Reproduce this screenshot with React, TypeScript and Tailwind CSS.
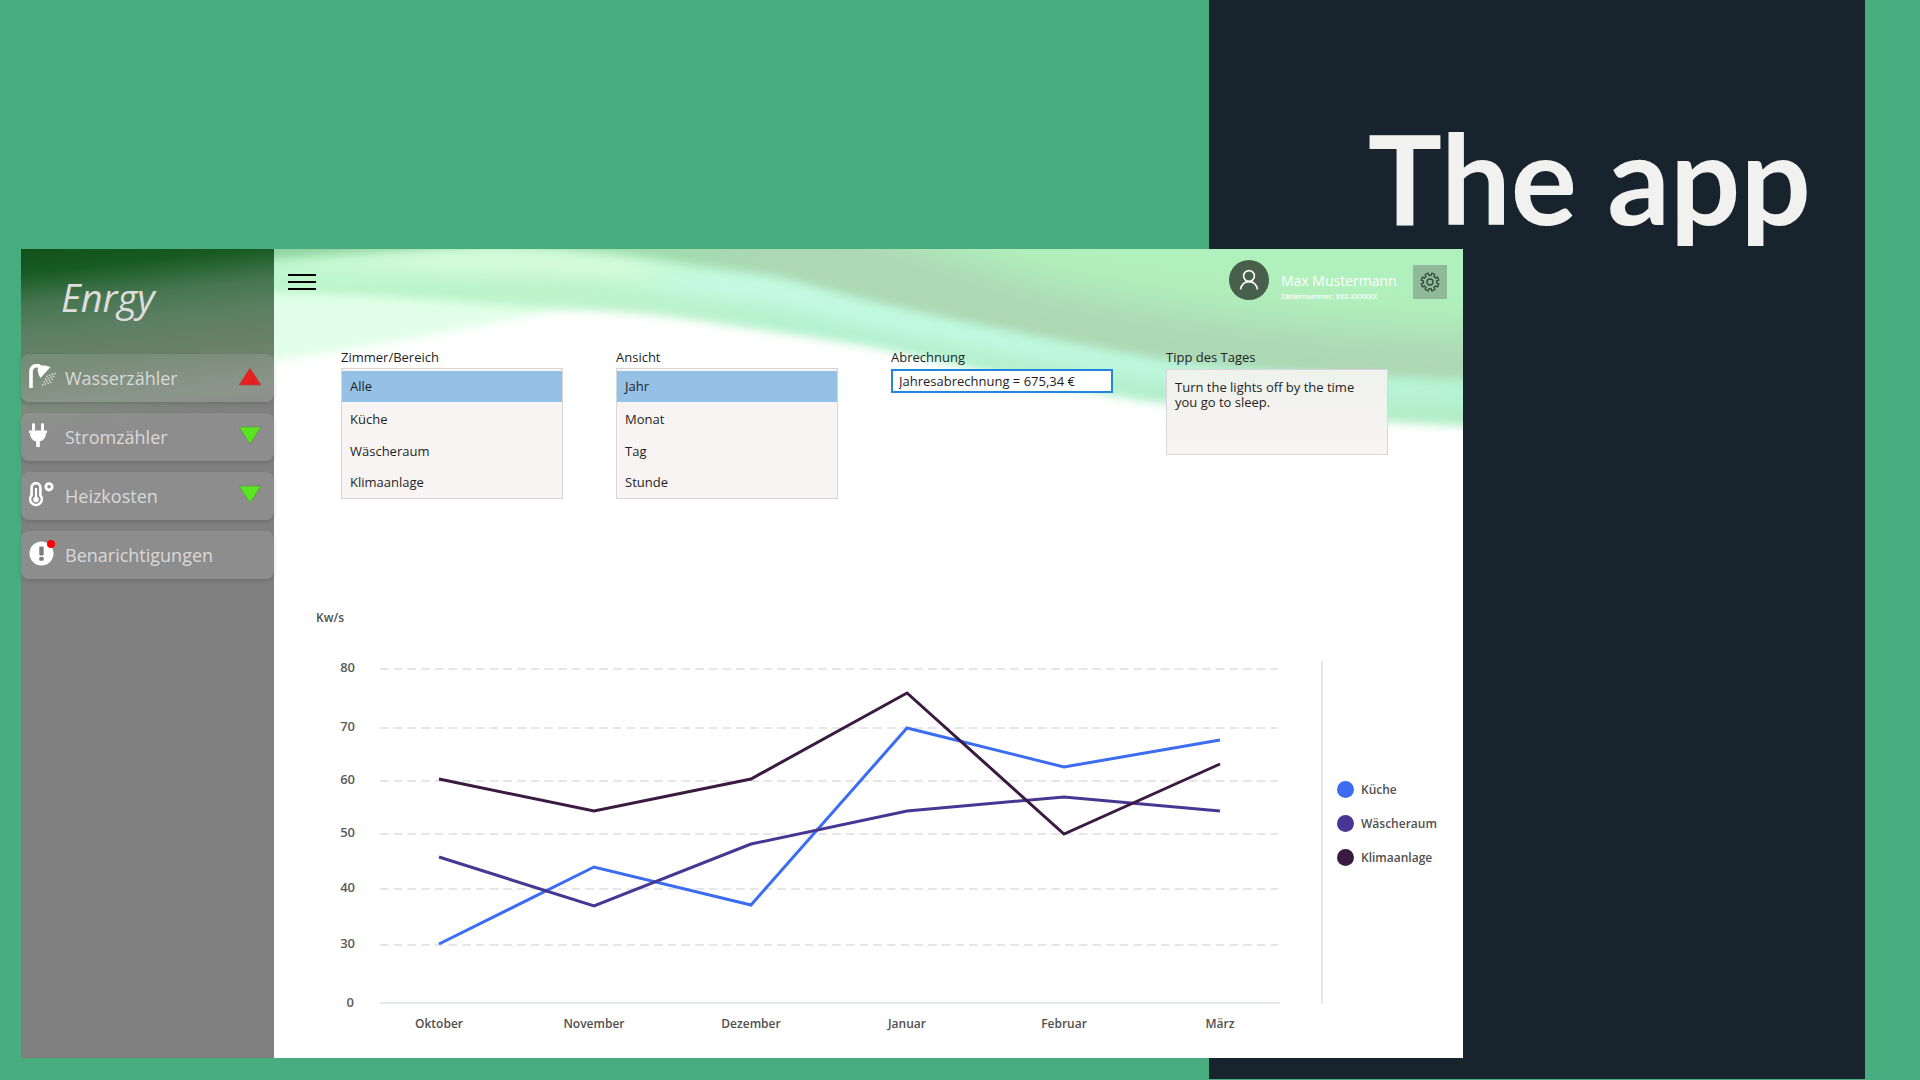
import type { ReactNode } from "react";

const months = ["Oktober", "November", "Dezember", "Januar", "Februar", "März"];
const monthX = [123, 278, 435, 591, 748, 904];

const ticks = [
  { label: "80", y: 19 },
  { label: "70", y: 78 },
  { label: "60", y: 131 },
  { label: "50", y: 184 },
  { label: "40", y: 239 },
  { label: "30", y: 295 },
];

const series = [
  { name: "Küche", color: "#3c6df0", ys: [294, 217, 255, 78, 117, 90] },
  { name: "Wäscheraum", color: "#473793", ys: [207, 256, 194, 161, 147, 161] },
  { name: "Klimaanlage", color: "#3a1a40", ys: [129, 161, 129, 43, 184, 114] },
];

function ShowerIcon() {
  const drops: number[][] = [];
  for (let r = 0; r < 4; r++) {
    for (let c = 0; c < 4; c++) drops.push([26 - r * 1.4 - c * 2.7, 9.5 + r * 2.9 + c * 0.9]);
  }
  return (
    <svg width="28" height="24" viewBox="0 0 28 24" aria-hidden="true">
      <path d="M2 24V7.5C2 1.5 8.5 0 12 3.5" fill="none" stroke="#fff" strokeWidth="3.6" />
      <path d="M9 3.5C13 0.5 17 1.5 21.5 3L11.5 14C9.5 10.5 8 7 9 3.5Z" fill="#fff" />
      {drops.map(([x, y]) => (
        <circle key={`${x}-${y}`} cx={x} cy={y} r="0.8" fill="#eee" />
      ))}
    </svg>
  );
}

function PlugIcon() {
  return (
    <svg width="28" height="24" viewBox="0 0 28 24" aria-hidden="true" fill="#fff">
      <rect x="3" y="0" width="3" height="8" rx="1.5" />
      <rect x="12" y="0" width="3" height="8" rx="1.5" />
      <path d="M0 7.5H18V10H17C17 14.5 14.5 17.5 10.8 18.5V24H7.2V18.5C3.5 17.5 1 14.5 1 10H0Z" />
    </svg>
  );
}

function ThermometerIcon() {
  return (
    <svg width="28" height="25" viewBox="0 0 28 25" aria-hidden="true" fill="none" stroke="#fff">
      <path d="M2.6 13.4V5.6A4.4 4.4 0 0 1 11.4 5.6V13.4A5.8 5.8 0 1 1 2.6 13.4Z" strokeWidth="2.6" />
      <path d="M7 6V17" strokeWidth="2.2" />
      <circle cx="7" cy="17.6" r="2.8" fill="#fff" stroke="none" />
      <circle cx="20" cy="4.8" r="3.2" strokeWidth="2.8" />
    </svg>
  );
}

function AlertIcon() {
  return (
    <svg width="28" height="26" viewBox="0 0 28 26" aria-hidden="true">
      <circle cx="12.5" cy="13.5" r="12" fill="#fff" />
      <rect x="10.3" y="6.5" width="4.4" height="9" rx="1.2" fill="#7d7d7d" />
      <rect x="10.3" y="17" width="4.4" height="3.8" rx="1.2" fill="#7d7d7d" />
      <circle cx="22" cy="4" r="4" fill="#f00" />
    </svg>
  );
}

function Trend({ dir }: { dir: "up" | "down" }) {
  return (
    <svg
      width="24"
      height="19"
      viewBox="0 0 24 19"
      role="img"
      aria-label={dir === "up" ? "steigend" : "fallend"}
      className="mb-1"
    >
      {dir === "up" ? (
        <path d="M12 1L23 18H1Z" fill="#e62020" stroke="#a05050" strokeWidth="0.7" />
      ) : (
        <path d="M12 18L23 1H1Z" fill="#5ae61e" stroke="#5c9048" strokeWidth="0.7" />
      )}
    </svg>
  );
}

function gearPath() {
  const pts: string[] = [];
  const steps: [number, number][] = [
    [-13, 6.8],
    [-11, 9],
    [11, 9],
    [13, 6.8],
  ];
  for (let i = 0; i < 8; i++) {
    for (const [off, r] of steps) {
      const a = ((i * 45 + 22.5 + off) * Math.PI) / 180;
      pts.push(`${(10 + r * Math.cos(a)).toFixed(2)} ${(10 + r * Math.sin(a)).toFixed(2)}`);
    }
  }
  return `M${pts.join("L")}Z`;
}

function Waves() {
  return (
    <svg
      className="absolute inset-x-0 top-0 h-[210px] w-full"
      viewBox="0 0 1189 210"
      preserveAspectRatio="none"
      aria-hidden="true"
    >
      <defs>
        <filter id="soft" x="-10%" y="-30%" width="120%" height="160%">
          <feGaussianBlur stdDeviation="5" />
        </filter>
        <filter id="softer" x="-10%" y="-60%" width="120%" height="220%">
          <feGaussianBlur stdDeviation="8" />
        </filter>
        <filter id="glow" x="-20%" y="-60%" width="140%" height="220%">
          <feGaussianBlur stdDeviation="18" />
        </filter>
        <linearGradient id="band" gradientUnits="userSpaceOnUse" x1="0" y1="0" x2="1189" y2="0">
          <stop offset="0" stopColor="#b9f5cb" />
          <stop offset="0.24" stopColor="#bff3ca" />
          <stop offset="0.45" stopColor="#b4f2cf" />
          <stop offset="1" stopColor="#b1edc6" />
        </linearGradient>
        <linearGradient id="cyan" gradientUnits="userSpaceOnUse" x1="340" y1="0" x2="1189" y2="0">
          <stop offset="0" stopColor="#c6fbe4" stopOpacity="0" />
          <stop offset="0.12" stopColor="#c6fbe4" />
          <stop offset="0.5" stopColor="#bef8df" />
          <stop offset="1" stopColor="#b6f3d4" />
        </linearGradient>
        <linearGradient id="light" gradientUnits="userSpaceOnUse" x1="0" y1="0" x2="440" y2="0">
          <stop offset="0" stopColor="#d5fcdb" stopOpacity="0.2" />
          <stop offset="0.4" stopColor="#d5fcdb" />
          <stop offset="0.8" stopColor="#d5fcdb" />
          <stop offset="1" stopColor="#d5fcdb" stopOpacity="0" />
        </linearGradient>
        <linearGradient id="edge" gradientUnits="userSpaceOnUse" x1="360" y1="0" x2="500" y2="0">
          <stop offset="0" stopColor="#9edbac" />
          <stop offset="1" stopColor="#add8b4" />
        </linearGradient>
      </defs>
      <path d="M-30 -30H400V45L280 62C200 78 100 98 -30 116Z" fill="#e1ffe8" filter="url(#soft)" />
      <path
        d="M-30 43C60 44 133 48 200 54C280 60 350 61 420 71C490 82 540 88 603 99C660 111 700 121 741 128C800 140 840 148 885 154C960 164 1100 173 1230 179V-30H-30Z"
        fill="url(#band)"
        filter="url(#soft)"
      />
      <path d="M-30 22C60 14 120 12 220 13C300 14 380 20 440 32" fill="none" stroke="url(#light)" strokeWidth="24" filter="url(#softer)" />
      <path
        d="M340 34C420 30 480 38 516 44C603 66 690 84 776 100C830 111 900 124 1000 132C1080 138 1160 142 1230 144"
        fill="none"
        stroke="url(#cyan)"
        strokeWidth="28"
        filter="url(#softer)"
      />
      <path
        d="M250 -30H1230V130C1100 128 960 121 885 109L776 89L690 72L603 53L516 30C470 20 430 18 400 12C350 4 300 0 250 -6Z"
        fill="url(#edge)"
        filter="url(#soft)"
      />
      <path d="M600 -80H1280V84C1060 84 900 62 780 36C720 20 660 0 600 -20Z" fill="#b0f0bc" filter="url(#glow)" />
      <path d="M-30 -30H200V-5C130 0 60 5 -30 12Z" fill="#92d3a0" filter="url(#soft)" />
    </svg>
  );
}

function NavItem({ icon, label, trend }: { icon: ReactNode; label: string; trend?: "up" | "down" }) {
  return (
    <li>
      <button className="flex h-12 w-full items-center rounded-lg bg-white/10 pr-3 pl-2 text-left shadow-[0_2px_4px_rgba(0,0,0,0.14)]">
        <span className="mb-1 w-9 shrink-0">{icon}</span>
        <span className="flex-1 text-lg text-[#d9d9d9]">{label}</span>
        {trend && <Trend dir={trend} />}
      </button>
    </li>
  );
}

function ListBox({ id, label, items }: { id: string; label: string; items: string[] }) {
  return (
    <div>
      <div id={id} className="h-[21px] leading-5">
        {label}
      </div>
      <div role="listbox" aria-labelledby={id} className="border border-[#d8d6d6] bg-[#f9f4f4] pt-[2px]">
        {items.map((item, i) => (
          <button
            key={item}
            role="option"
            aria-selected={i === 0}
            className={
              i === 0
                ? "mb-[2px] block h-[31px] w-full bg-[#95c1e7] px-2 text-left"
                : "block h-8 w-full px-2 text-left last:h-[30px]"
            }
          >
            {item}
          </button>
        ))}
      </div>
    </div>
  );
}

function Chart() {
  return (
    <svg viewBox="0 0 966 386" className="h-auto min-w-0 flex-1" role="img" aria-label="Verbrauch in Kw/s">
      {ticks.map((t) => (
        <g key={t.label}>
          <text x="39" y={t.y + 3} textAnchor="end" fontSize="13" fontWeight="600" fill="#5a5a5a">
            {t.label}
          </text>
          <path d={`M64 ${t.y}H962`} stroke="#e3e7ea" strokeWidth="2" strokeDasharray="8.7 5" />
        </g>
      ))}
      <text x="38" y="357" textAnchor="end" fontSize="13" fontWeight="600" fill="#5a5a5a">
        0
      </text>
      <path d="M64 353H964" stroke="#e3e8eb" strokeWidth="2" />
      {series.map((s) => (
        <polyline
          key={s.name}
          points={s.ys.map((y, i) => `${monthX[i]},${y}`).join(" ")}
          fill="none"
          stroke={s.color}
          strokeWidth="3"
        />
      ))}
      {months.map((m, i) => (
        <text key={m} x={monthX[i]} y="378" textAnchor="middle" fontSize="12" fontWeight="600" fill="#505050">
          {m}
        </text>
      ))}
    </svg>
  );
}

export default function App() {
  return (
    <div className="grid min-h-screen grid-cols-[21px_1188fr_254fr_402fr_55px] grid-rows-[249px_1fr_22px] bg-[#47ad7f] font-['Open_Sans','Noto_Sans',sans-serif]">
      <div className="col-span-2 col-start-3 row-span-3 row-start-1 mb-px bg-[#18242d]" />
      <h1 className="col-span-2 col-start-3 row-start-1 pt-[103px] pr-[54px] text-right font-['Lato',sans-serif] text-[124px] leading-[148px] font-bold whitespace-nowrap text-[#f1f1ef]">
        The app
      </h1>

      <div className="col-span-2 col-start-2 row-start-2 flex bg-white">
        <aside className="w-[253px] shrink-0 bg-[linear-gradient(174deg,#12521a_0px,#175a22_24px,#477650_56px,#5c7f63_85px,#6b8069_120px,#7e8a7d_160px,#808080_180px)]">
          <div className="flex h-[105px] items-center pl-[40px] text-[38px] text-[#dddddd] italic">
            <span className="mb-2">Enrgy</span>
          </div>
          <ul className="flex flex-col gap-[11px]">
            <NavItem icon={<ShowerIcon />} label="Wasserzähler" trend="up" />
            <NavItem icon={<PlugIcon />} label="Stromzähler" trend="down" />
            <NavItem icon={<ThermometerIcon />} label="Heizkosten" trend="down" />
            <NavItem icon={<AlertIcon />} label="Benarichtigungen" />
          </ul>
        </aside>

        <main className="relative min-w-0 flex-1 text-[13px] text-[#1e1e1e]">
          <Waves />
          <div className="relative">
            <header className="flex h-[66px] items-center pr-4 pl-[14px]">
              <button aria-label="Menü">
                <svg width="28" height="18" viewBox="0 0 28 18" stroke="#000" strokeWidth="2">
                  <path d="M0 2H28M0 9H28M0 16H28" />
                </svg>
              </button>
              <div className="mb-1 ml-auto flex h-10 w-10 items-center justify-center rounded-full bg-[#475f4b]">
                <svg width="20" height="22" viewBox="0 0 20 22" fill="none" stroke="#fff" strokeWidth="1.6" aria-hidden="true">
                  <circle cx="10" cy="7" r="5.4" />
                  <path d="M1.5 20.5C2.5 15.5 5.5 12.6 10 12.6S17.5 15.5 18.5 20.5" />
                </svg>
              </div>
              <div className="ml-3 w-[132px] pt-2 text-white">
                <div className="text-[14px] leading-[22px] font-medium whitespace-nowrap">Max Mustermann</div>
                <div className="text-[7px] leading-[10px] font-semibold whitespace-nowrap">Zählernummer: XXX-XXXXXX</div>
              </div>
              <button aria-label="Einstellungen" className="flex h-[34px] w-[34px] items-center justify-center bg-[#8fb999]">
                <svg width="20" height="20" viewBox="0 0 20 20" fill="none" stroke="#2f4a38" strokeWidth="1.3" strokeLinejoin="round">
                  <path d={gearPath()} />
                  <circle cx="10" cy="10" r="3" />
                </svg>
              </button>
            </header>

            <section className="mt-8 grid grid-cols-4 items-start gap-[53px] pr-[75px] pl-[67px]">
              <ListBox id="room" label="Zimmer/Bereich" items={["Alle", "Küche", "Wäscheraum", "Klimaanlage"]} />
              <ListBox id="view" label="Ansicht" items={["Jahr", "Monat", "Tag", "Stunde"]} />
              <div>
                <label htmlFor="bill" className="block h-[22px] leading-5">
                  Abrechnung
                </label>
                <input
                  id="bill"
                  readOnly
                  value="Jahresabrechnung = 675,34 €"
                  className="block h-6 w-full border-2 border-[#2186dc] bg-white px-[6px] outline-none"
                />
              </div>
              <div>
                <label htmlFor="tip" className="block h-[22px] leading-5">
                  Tipp des Tages
                </label>
                <textarea
                  id="tip"
                  readOnly
                  value={"Turn the lights off by the time\nyou go to sleep."}
                  className="block h-[86px] w-full resize-none border border-[#d8d6d6] bg-linear-to-b from-[#eef1ec] to-[#f9f4f4] px-2 pt-[10px] leading-[15px] outline-none"
                />
              </div>
            </section>

            <section className="mt-[109px] pb-[22px] pl-[42px] text-[#505050]">
              <h2 className="text-[12px] leading-5 font-semibold">Kw/s</h2>
              <div className="mt-[22px] flex">
                <Chart />
                <ul className="mt-[11px] mb-[32px] ml-[39px] flex w-[142px] shrink-0 flex-col justify-center gap-[14px] border-l-2 border-[#e3e8eb] pb-[18px] pl-[14px] text-[12px] font-semibold">
                  {series.map((s) => (
                    <li key={s.name} className="flex h-5 items-center gap-[7px]">
                      <span className="h-[17px] w-[17px] rounded-full" style={{ backgroundColor: s.color }} />
                      {s.name}
                    </li>
                  ))}
                </ul>
              </div>
            </section>
          </div>
        </main>
      </div>
    </div>
  );
}
